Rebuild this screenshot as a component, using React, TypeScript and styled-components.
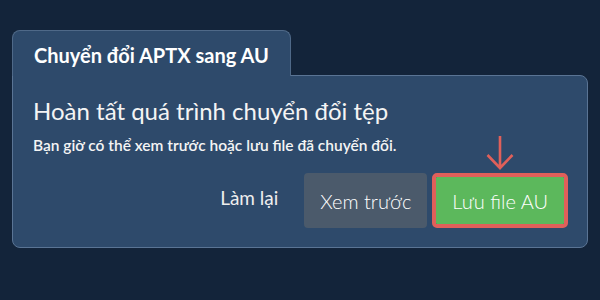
import styled, { createGlobalStyle } from "styled-components";

const GlobalStyle = createGlobalStyle`
  html, body {
    margin: 0;
    padding: 0;
    background: #13243a;
  }
  body {
    font-family: Lato, "Noto Sans", sans-serif;
    color: #f2f2f2;
  }
`;

export default function App() {
  return (
    <>
      <GlobalStyle />
      <Page>
        <Tab>Chuyển đổi APTX sang AU</Tab>
        <Card>
          <Title>Hoàn tất quá trình chuyển đổi tệp</Title>
          <Subtitle>Bạn giờ có thể xem trước hoặc lưu file đã chuyển đổi.</Subtitle>
          <Actions>
            <LinkButton>Làm lại</LinkButton>
            <Button>Xem trước</Button>
            <Highlight>
              <Arrow width="28" height="35" viewBox="0 0 28 35">
                <path
                  d="M14 1 V33 M1.5 20 L14 33 L26.5 20"
                  fill="none"
                  stroke="#e0605a"
                  strokeWidth="2.6"
                />
              </Arrow>
              <Button $primary>Lưu file AU</Button>
            </Highlight>
          </Actions>
        </Card>
      </Page>
    </>
  );
}

const Page = styled.div`
  padding: 30px 12px 0 12px;
  display: flex;
  flex-direction: column;
  align-items: flex-start;
`;

const Tab = styled.div`
  background: #2e4a6b;
  border: 1px solid #4f6988;
  border-bottom: none;
  border-radius: 8px 8px 0 0;
  padding: 14px 21px 11px 21px;
  font-size: 20px;
  font-weight: 700;
  line-height: 20px;
  color: #ffffff;
  position: relative;
  z-index: 1;
  margin-bottom: -1px;
`;

const Card = styled.div`
  align-self: stretch;
  background: #2e4a6b;
  border: 1px solid #5a7494;
  border-radius: 0 8px 8px 8px;
  padding: 21px 19px 19px 20px;
  display: flex;
  flex-direction: column;
`;

const Title = styled.h1`
  margin: 0;
  font-size: 24px;
  font-weight: 400;
  line-height: 28px;
  color: #f4f4f4;
`;

const Subtitle = styled.p`
  margin: 10px 0 0 0;
  font-size: 15.5px;
  font-weight: 600;
  line-height: 20px;
  color: #f4f4f4;
`;

const Actions = styled.div`
  margin-top: 18px;
  display: flex;
  justify-content: flex-end;
  align-items: center;
  gap: 5px;
`;

const LinkButton = styled.button`
  background: none;
  border: none;
  color: #eeeeee;
  font-family: inherit;
  font-size: 19px;
  font-weight: 400;
  padding: 0 21px;
  height: 55px;
  margin-top: -6px;
`;

const Highlight = styled.div`
  position: relative;
  border: 4px solid #e0605a;
  border-radius: 5px;
  display: flex;
`;

const Arrow = styled.svg`
  position: absolute;
  left: 50%;
  top: -42px;
  transform: translateX(-50%);
`;

const Button = styled.button<{ $primary?: boolean }>`
  background: ${(p) => (p.$primary ? "#5cb85c" : "#4b5a6b")};
  border: none;
  border-radius: ${(p) => (p.$primary ? "1px" : "4px")};
  color: #ffffff;
  font-family: inherit;
  font-size: 20px;
  font-weight: 300;
  height: ${(p) => (p.$primary ? "47px" : "55px")};
  padding: 0 16px;
`;
